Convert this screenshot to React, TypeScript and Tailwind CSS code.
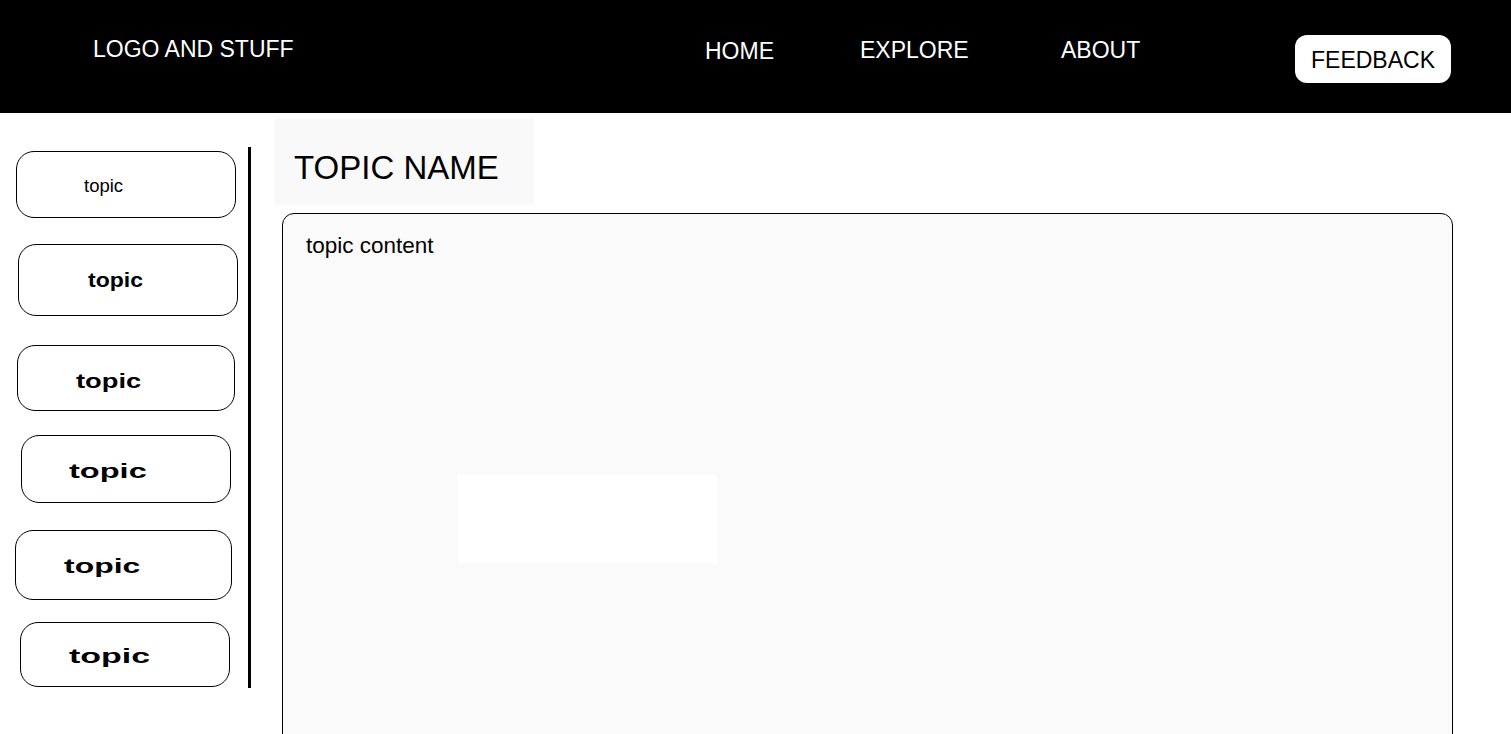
const topics = [
  { ml: "ml-[16px]", w: "w-[220px]", h: "h-[67px]", mt: "mt-[38px]", pl: "pl-[67px]", pt: "pt-[4px]", txt: "text-[18.5px] font-normal" },
  { ml: "ml-[18px]", w: "w-[220px]", h: "h-[72px]", mt: "mt-[26px]", pl: "pl-[69px]", pt: "pt-[0px]", txt: "text-[20px] font-bold scale-x-[1.15]" },
  { ml: "ml-[17px]", w: "w-[218px]", h: "h-[66px]", mt: "mt-[29px]", pl: "pl-[58px]", pt: "pt-[4px]", txt: "text-[21px] font-bold scale-x-[1.3]" },
  { ml: "ml-[21px]", w: "w-[210px]", h: "h-[68px]", mt: "mt-[24px]", pl: "pl-[47px]", pt: "pt-[2px]", txt: "text-[21px] font-bold scale-x-[1.55]" },
  { ml: "ml-[15px]", w: "w-[217px]", h: "h-[70px]", mt: "mt-[27px]", pl: "pl-[48px]", pt: "pt-[0px]", txt: "text-[21px] font-bold scale-x-[1.52]" },
  { ml: "ml-[20px]", w: "w-[210px]", h: "h-[65px]", mt: "mt-[22px]", pl: "pl-[48px]", pt: "pt-[2px]", txt: "text-[20px] font-bold scale-x-[1.7]" },
];

function Header() {
  return (
    <div className="flex items-start h-[113px] bg-black text-white pl-[93px] text-[23px] leading-none">
      <div className="w-[612px] pt-[38px]">LOGO AND STUFF</div>
      <div className="w-[155px] pt-[40px]">HOME</div>
      <div className="w-[201px] pt-[39px]">EXPLORE</div>
      <div className="w-[234px] pt-[39px]">ABOUT</div>
      <button className="mt-[35px] w-[156px] h-[48px] bg-white text-black rounded-[12px] text-left pl-[16px] pt-[2px] text-[23px] leading-none">
        FEEDBACK
      </button>
    </div>
  );
}

function Sidebar() {
  return (
    <div className="flex">
      <div className="flex flex-col w-[248px]">
        {topics.map((t, i) => (
          <div
            key={i}
            className={`flex items-center border border-black rounded-[18px] bg-white ${t.ml} ${t.w} ${t.h} ${t.mt} ${t.pl} ${t.pt}`}
          >
            <span className={`inline-block origin-left text-black leading-none ${t.txt}`}>topic</span>
          </div>
        ))}
      </div>
      <div className="w-[3px] bg-black mt-[34px] h-[541px]" />
    </div>
  );
}

function Main() {
  return (
    <div className="flex flex-col ml-[24px] pt-[5px]">
      <div className="w-[259px] h-[87px] bg-[#f9f9f9] flex items-center pl-[19px] pt-[12px] text-[33px] leading-none text-black">
        TOPIC NAME
      </div>
      <div className="mt-[8px] ml-[7px] w-[1171px] h-[540px] border border-black rounded-t-[12px] bg-[#fafafa] pl-[23px] pt-[19px]">
        <p className="text-[22.5px] leading-[26px] text-black">topic content</p>
        <div className="mt-[216px] ml-[152px] w-[259px] h-[88px] bg-white" />
      </div>
    </div>
  );
}

export default function App() {
  return (
    <div className="w-[1511px] h-[734px] overflow-hidden bg-white" style={{ fontFamily: '"Liberation Sans", Arial, sans-serif' }}>
      <Header />
      <div className="flex">
        <Sidebar />
        <Main />
      </div>
    </div>
  );
}
